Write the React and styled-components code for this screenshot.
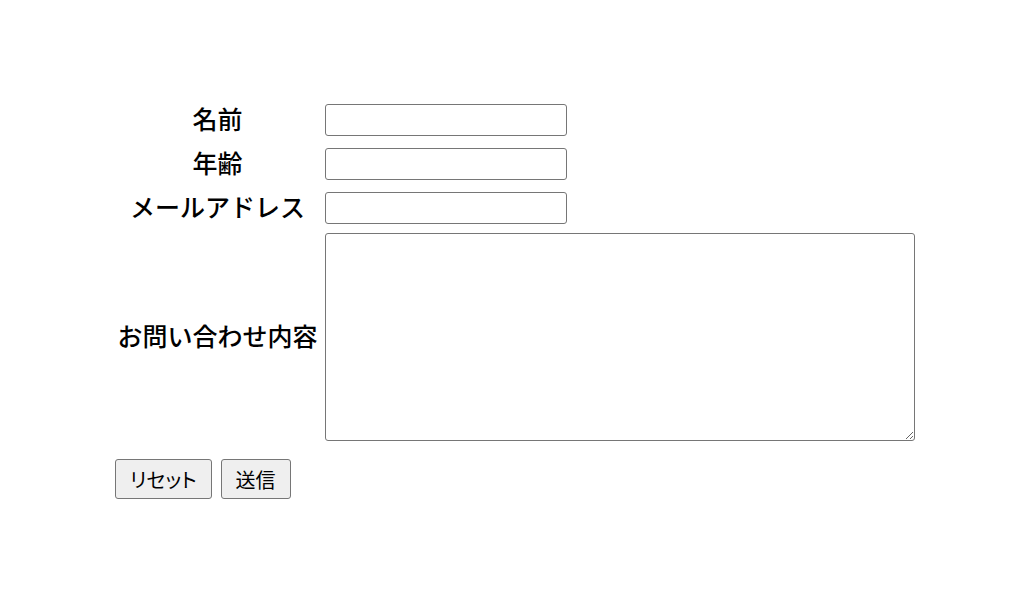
import React from 'react';
import styled, { createGlobalStyle } from 'styled-components';

const GlobalStyle = createGlobalStyle`
  body {
    margin: 0;
    background: #ffffff;
    font-family: "Noto Sans CJK JP", "Liberation Sans", sans-serif;
    color: #000;
  }
`;

const fields = [
  { label: '名前', type: 'text' },
  { label: '年齢', type: 'text' },
  { label: 'メールアドレス', type: 'email' },
];

const App = () => {
  return (
    <>
      <GlobalStyle />
      <Page>
        <Form onSubmit={(e) => e.preventDefault()}>
          <Grid>
            {fields.map((f) => (
              <React.Fragment key={f.label}>
                <Label>{f.label}</Label>
                <Cell>
                  <Input type={f.type} />
                </Cell>
              </React.Fragment>
            ))}
            <Label>お問い合わせ内容</Label>
            <Cell>
              <TextArea />
            </Cell>
          </Grid>
          <Buttons>
            <Button type="reset">リセット</Button>
            <Button type="submit">送信</Button>
          </Buttons>
        </Form>
      </Page>
    </>
  );
};

export default App;

const Page = styled.div`
  width: 100%;
  height: 597px;
  padding: 100px 0 0 115px;
  box-sizing: border-box;
`;

const Form = styled.form`
  display: flex;
  flex-direction: column;
  align-items: flex-start;
`;

const Grid = styled.div`
  display: grid;
  grid-template-columns: 205px auto;
  grid-template-rows: 40px 40px 40px 210px;
  row-gap: 4px;
  column-gap: 5px;
`;

const Label = styled.div`
  display: flex;
  align-items: center;
  justify-content: center;
  padding-bottom: 4px;
  font-size: 25px;
  font-weight: 500;
  line-height: 1;
  white-space: nowrap;
`;

const Cell = styled.div`
  display: flex;
  align-items: center;
`;

const Input = styled.input`
  width: 242px;
  height: 32px;
  box-sizing: border-box;
  border: 1px solid #767676;
  border-radius: 3px;
  padding: 1px 4px;
  font-size: 18px;
  outline: none;
`;

const TextArea = styled.textarea`
  width: 590px;
  height: 208px;
  box-sizing: border-box;
  border: 1px solid #767676;
  border-radius: 3px;
  font-size: 18px;
  outline: none;
`;

const Buttons = styled.div`
  display: flex;
  gap: 9px;
  margin-top: 17px;
`;

const Button = styled.button`
  height: 40px;
  padding: 0 14px;
  box-sizing: border-box;
  background: #efefef;
  border: 1px solid #767676;
  border-radius: 3px;
  font-family: "Noto Sans CJK JP", "Liberation Sans", sans-serif;
  font-size: 20px;
  font-feature-settings: "palt";
  color: #000;
`;
